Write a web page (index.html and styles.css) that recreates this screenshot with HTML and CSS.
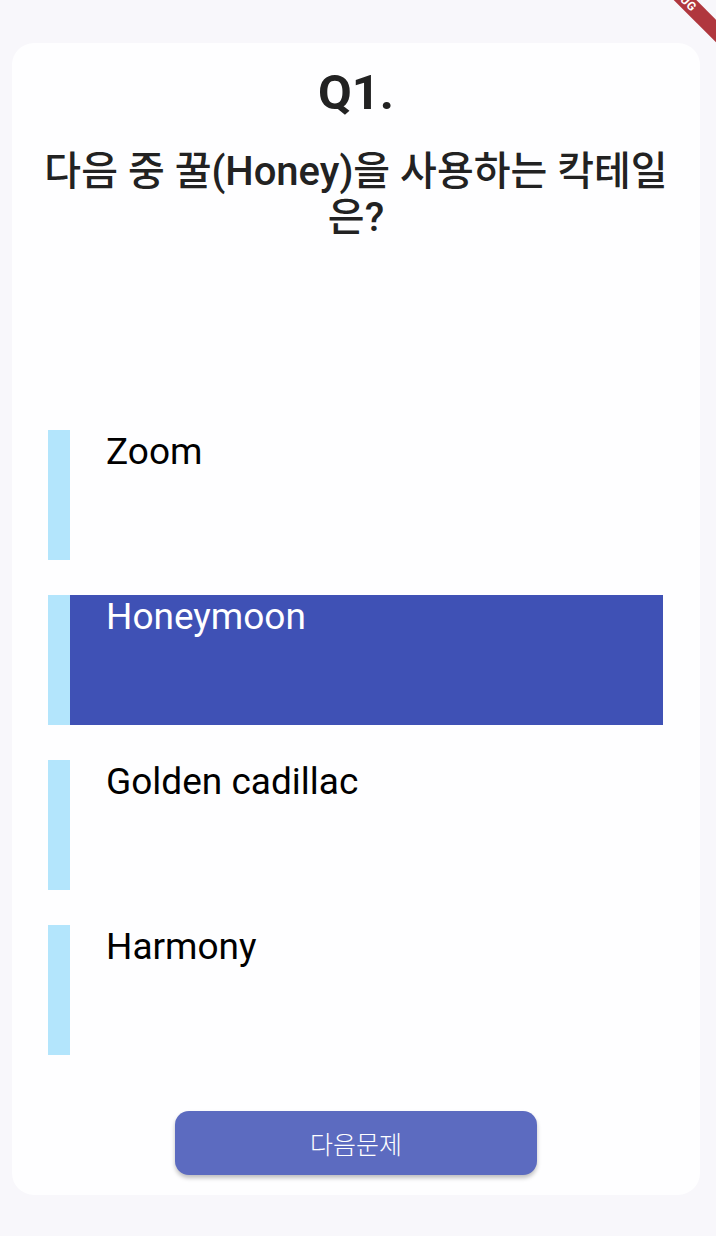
FILE: index.html
```html
<!DOCTYPE html>
<html lang="ko">
<head>
    <meta charset="UTF-8">
    <meta name="viewport" content="width=device-width, initial-scale=1.0">
    <title>칵테일 퀴즈</title>
    <link rel="stylesheet" href="styles.css">
</head>
<body>
    <div class="page">
        <div class="quiz-card">
            <h1 class="quiz-number">Q1.</h1>
            <p class="quiz-question">다음 중 꿀(Honey)을 사용하는 칵테일은?</p>

            <ul class="answer-list">
                <li class="answer">
                    <span class="answer-bar"></span>
                    <span class="answer-text">Zoom</span>
                </li>
                <li class="answer selected">
                    <span class="answer-bar"></span>
                    <span class="answer-text">Honeymoon</span>
                </li>
                <li class="answer">
                    <span class="answer-bar"></span>
                    <span class="answer-text">Golden cadillac</span>
                </li>
                <li class="answer">
                    <span class="answer-bar"></span>
                    <span class="answer-text">Harmony</span>
                </li>
            </ul>

            <div class="next-wrap">
                <button class="next-button">다음문제</button>
            </div>
        </div>
    </div>

    <div class="debug-banner">DEBUG</div>
</body>
</html>
```

FILE: styles.css
```css
/* 기본 초기화 */
* {
    margin: 0;
    padding: 0;
    box-sizing: border-box;
}

body {
    font-family: Roboto, "Noto Sans CJK KR", sans-serif;
    background: #f8f7fb;
    color: #000;
    height: 1236px;
    overflow: hidden;
    position: relative;
}

.page {
    padding: 43px 16px 0 12px;
}

/* 퀴즈 카드 */
.quiz-card {
    background: #fefeff;
    border-radius: 22px;
    height: 1152px;
    display: flex;
    flex-direction: column;
    padding: 0 36px 20px 36px;
}

.quiz-number {
    text-align: center;
    font-size: 49px;
    font-weight: 700;
    color: #222;
    line-height: 49px;
    margin-top: 25px;
}

.quiz-question {
    text-align: center;
    font-size: 40px;
    font-weight: 500;
    color: #222;
    line-height: 46px;
    margin-top: 32px;
    margin-left: -10px;
    margin-right: -10px;
}

/* 보기 목록 */
.answer-list {
    list-style: none;
    display: flex;
    flex-direction: column;
    gap: 35px;
    margin-top: 189px;
}

.answer {
    display: flex;
    height: 130px;
    width: 615px;
}

.answer-bar {
    width: 22px;
    flex-shrink: 0;
    background: #b3e5fc;
}

.answer-text {
    flex: 1;
    font-size: 37px;
    line-height: 1.17;
    padding-left: 36px;
}

.answer.selected .answer-text {
    background: #3f51b5;
    color: #fff;
}

/* 다음 버튼 */
.next-wrap {
    margin-top: auto;
    display: flex;
    justify-content: center;
}

.next-button {
    width: 362px;
    height: 64px;
    border: none;
    border-radius: 14px;
    background: #5c6bc0;
    color: #fff;
    font-family: "Noto Sans CJK KR", sans-serif;
    font-size: 25px;
    font-weight: 300;
    box-shadow: 0 3px 4px rgba(0, 0, 0, 0.25);
}

/* 디버그 배너 */
.debug-banner {
    position: absolute;
    left: 620px;
    top: -13px;
    width: 120px;
    height: 16px;
    transform: rotate(45deg);
    background: #b0373e;
    color: #fff;
    font-family: Roboto, sans-serif;
    font-size: 12px;
    font-weight: 700;
    line-height: 16px;
    text-align: center;
    letter-spacing: 0.5px;
}
```
